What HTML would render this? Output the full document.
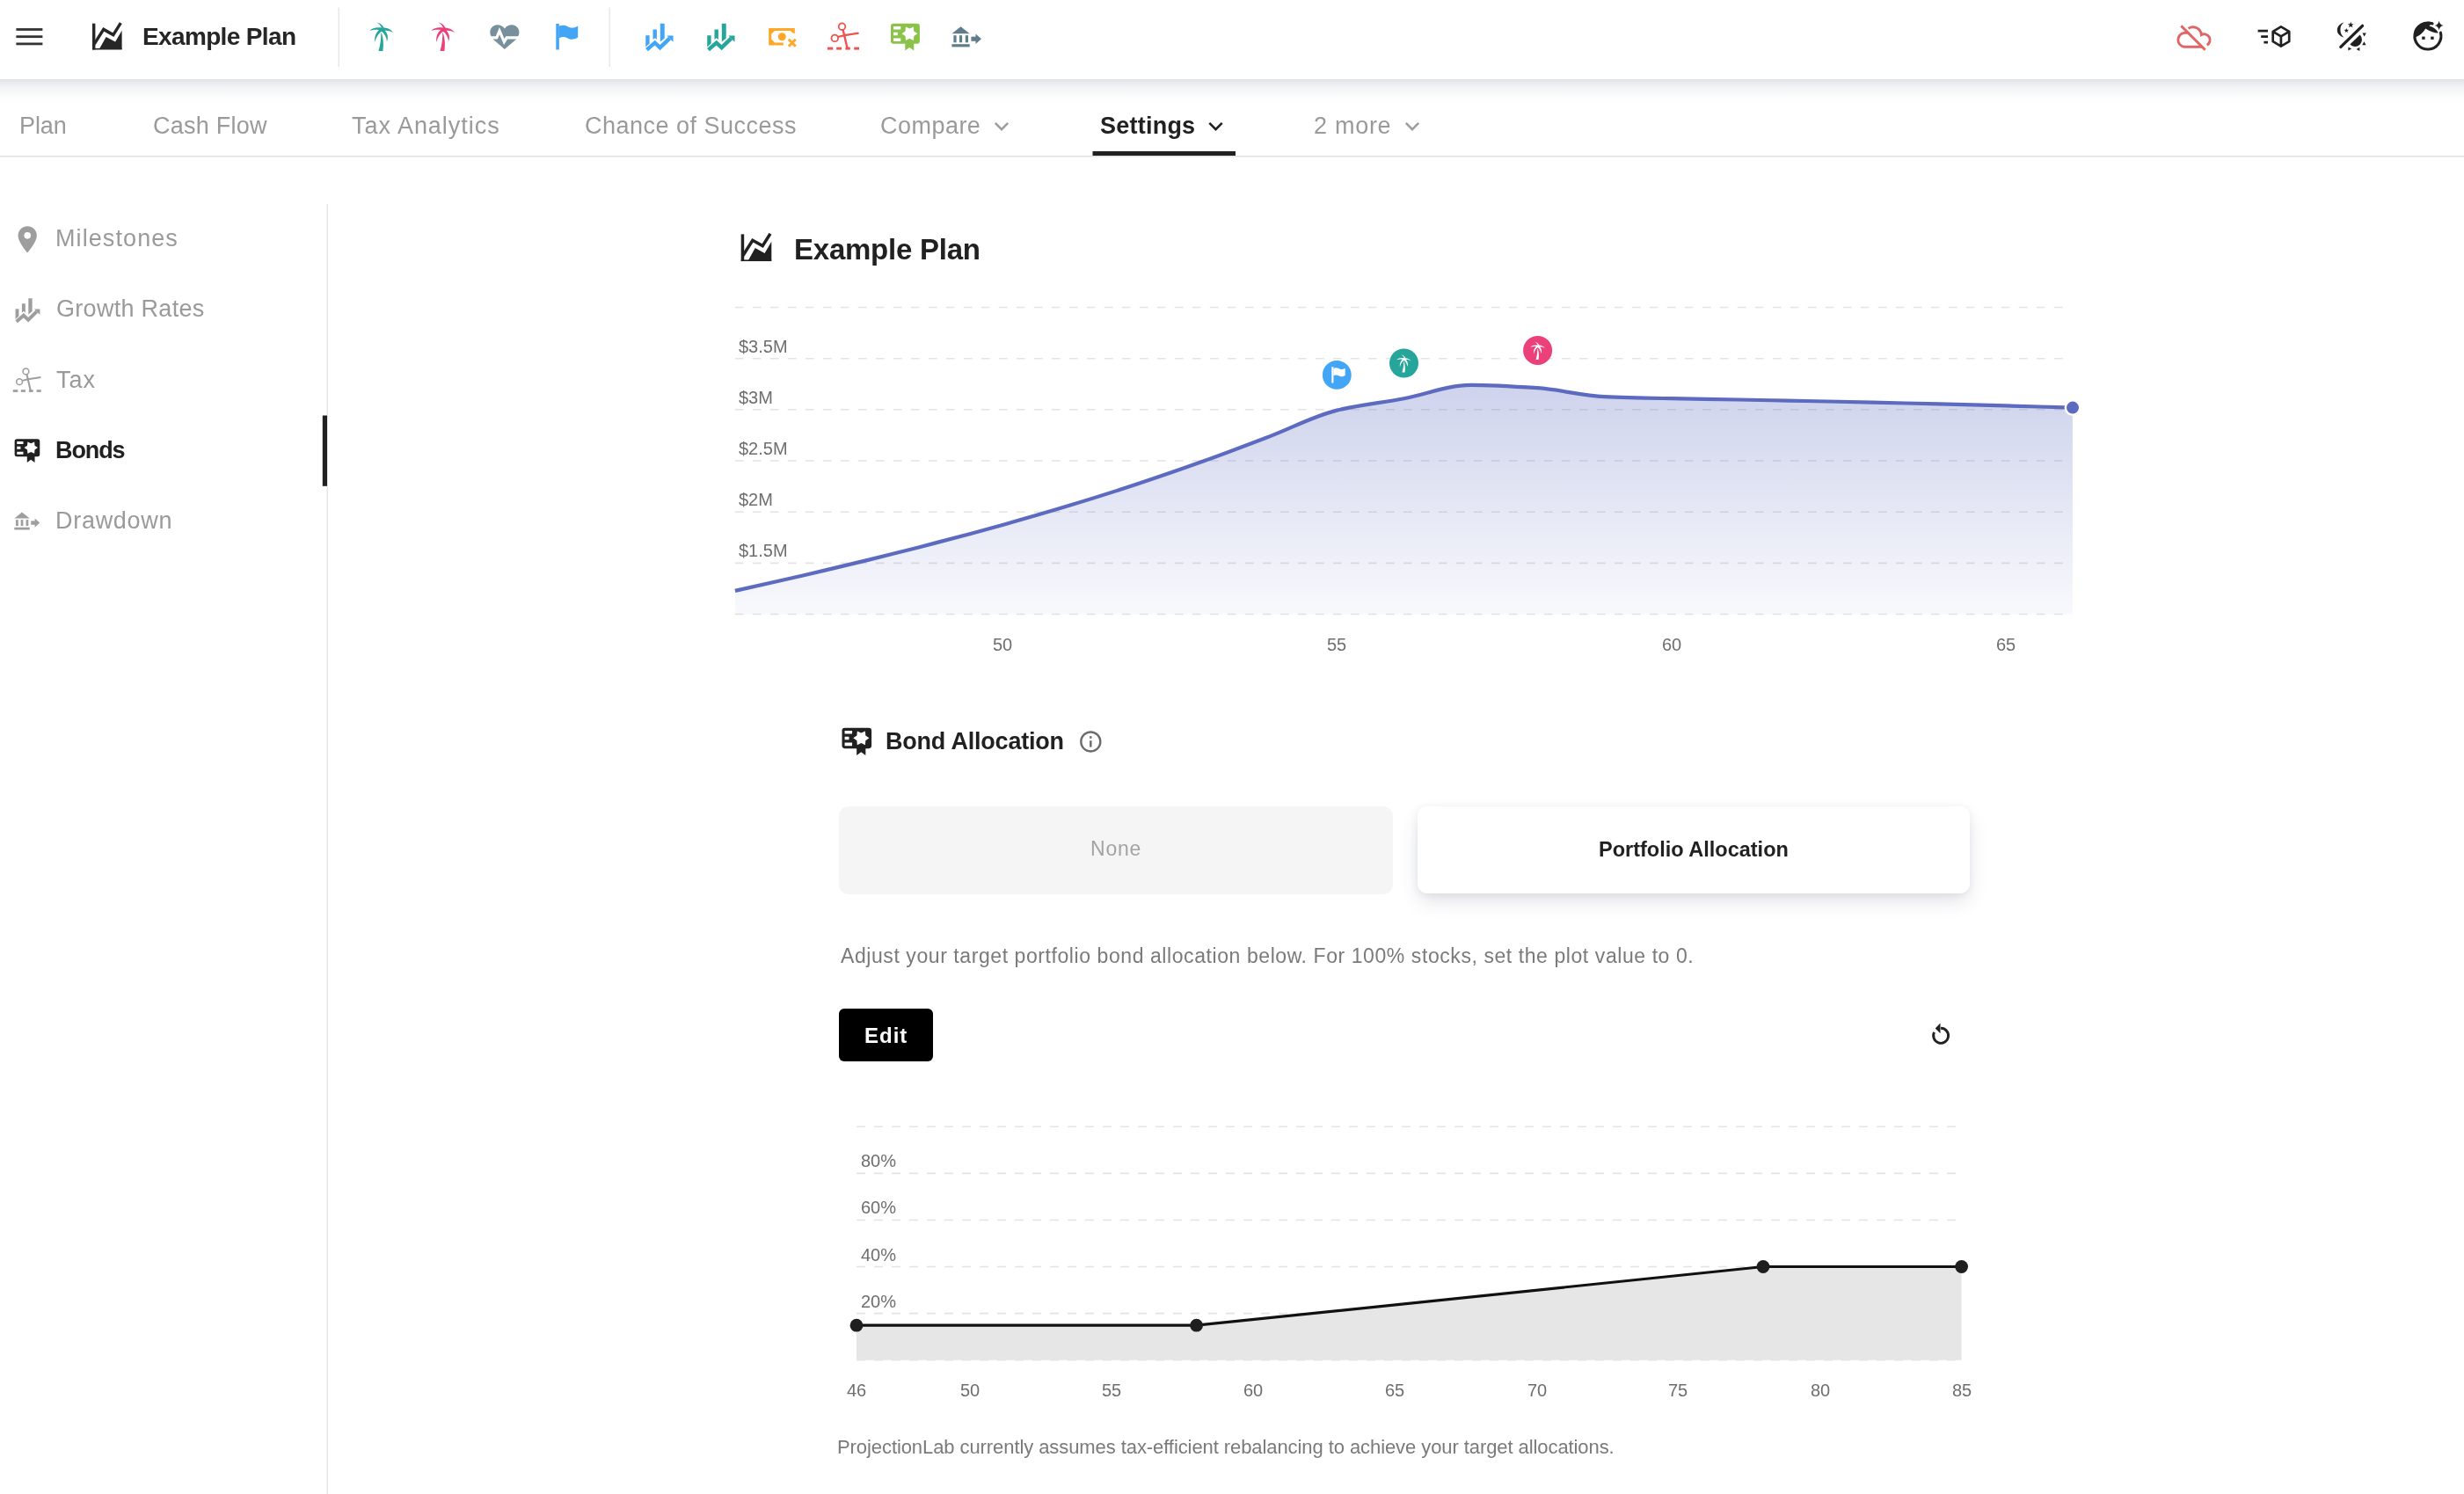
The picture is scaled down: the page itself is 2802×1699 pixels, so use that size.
<!DOCTYPE html>
<html><head><meta charset="utf-8"><title>ProjectionLab - Settings</title>
<style>
html,body{margin:0;padding:0;}
body{width:2802px;height:1699px;overflow:hidden;position:relative;background:#fff;font-family:"Liberation Sans", sans-serif;}
.t{position:absolute;white-space:nowrap;line-height:1;will-change:transform;}
.topbar{position:absolute;left:0;top:0;width:2802px;height:90px;background:#fff;}
.shadow{position:absolute;left:0;top:90px;width:2802px;height:28px;background:linear-gradient(to bottom, rgba(80,95,120,0.17), rgba(80,95,120,0.07) 35%, rgba(80,95,120,0.02) 70%, rgba(80,95,120,0) 100%);}
.btn{position:absolute;display:flex;align-items:center;justify-content:center;box-sizing:border-box;}
svg.ov{position:absolute;left:0;top:0;}
</style></head>
<body>
<div class="topbar"></div>
<div class="shadow"></div>
<div class="btn" style="left:954.2px;top:916.5px;width:630px;height:100px;background:#f5f5f5;border-radius:11px;"></div>
<div class="btn" style="left:1611.8px;top:917px;width:628.7px;height:99.4px;background:#fff;border-radius:11px;box-shadow:0 10px 22px -2px rgba(60,70,100,0.16), 0 2px 8px rgba(60,70,100,0.07);"></div>
<div class="btn" style="left:954.4px;top:1146.7px;width:106.8px;height:60.3px;background:#000;border-radius:6px;"></div>
<svg class="ov" width="2802" height="1699" viewBox="0 0 2802 1699">
<defs>
<g id="i-chart"><g transform="translate(-21.8,-21.6)">
<rect x="5" y="6.7" width="3.4" height="29.8"/>
<rect x="5" y="34.9" width="33.6" height="1.6"/>
<polyline points="7.2,30.2 17.8,13.4 28.8,19.6 37.3,6.1" fill="none" stroke="currentColor" stroke-width="3.4" stroke-linejoin="miter"/>
<polygon points="12.8,36 20.6,21.9 31.1,27.6 38.6,14.8 38.6,36"/>
</g></g><g id="i-growth"><g transform="translate(-24.9,-22.3)">
<polygon points="9.25,20.2 13.6,20.2 13.6,29.6 9.25,33.4"/>
<polygon points="17.5,13.6 21.9,13.6 21.9,24.9 19.7,23.3 17.5,24.9"/>
<polygon points="25.8,6.8 30.7,6.8 30.7,23.4 25.8,27.6"/>
<polyline points="10.5,36.6 19.7,28.6 25.6,34.2 36.5,23.6" fill="none" stroke="currentColor" stroke-width="4.4" stroke-linejoin="miter"/>
<polygon points="33.4,20.4 40.5,20.4 40.5,27.8"/>
</g></g><g id="i-palm"><g transform="translate(-23.75,-23.75)">
<path d="M23.3,18.5 C25.8,24 26.6,32 25.4,40 L20.5,40 C22.6,33 23.4,26 23.3,18.5 Z"/>
<path d="M24.2,13.6 C18.5,12.6 13.2,13.6 10.5,17 C14,15.6 18,15.4 21,16 C17.6,19.2 15.4,24 16.4,30 C17.6,24.3 20.6,19.6 24.6,17.2 Z"/>
<path d="M23.6,13.6 C29.6,13 34.8,15.2 37,19 C33.6,17 30.2,16.4 27.6,16.8 C30.6,20 32,24.2 30,29.2 C29.6,24.2 27.4,20 23.4,17.2 Z"/>
<path d="M24.6,14.5 C23.4,11.4 21.2,9 18.4,7.4 C22,7.8 25,10.2 26.6,13.8 Z"/>
</g></g><g id="i-heart"><g transform="translate(-23.85,-22.15)">
<path d="M23.85,12.6 C21.6,9.6 18.6,8.3 15.6,8.3 C11,8.3 7.3,12 7.3,16.6 C7.3,19.6 8.6,22.2 10.8,24.8 L23.85,36 L36.9,24.8 C39.1,22.2 40.4,19.6 40.4,16.6 C40.4,12 36.7,8.3 32.1,8.3 C29.1,8.3 26.1,9.6 23.85,12.6 Z"/>
<polyline points="6,22.8 14.8,22.8 18,15.2 23.3,27.6 26.2,22.8 42,22.8" fill="none" stroke="#fff" stroke-width="3.2" stroke-linejoin="miter"/>
</g></g><g id="i-flag"><g transform="translate(-94.75,-21.75)">
<rect x="82.3" y="7" width="3.5" height="29.5"/>
<path d="M85.6,9.8 C89,8.4 92,8.4 95.2,10 C98.6,11.8 102,12.6 107.2,9.4 L107.2,22.6 C102,25.8 98.6,25 95.2,23.2 C92,21.6 89,21.6 85.6,23.4 Z"/>
</g></g><g id="i-money"><g transform="translate(-19.6,-16.5)">
<path d="M4.2,6 H33.8 V12 C32,12 30.4,10.8 29,9 H11 L7.2,12.8 V18.6 L11,22.4 H20.8 V25.5 H4.2 Z"/>
<circle cx="19.3" cy="15.7" r="4.5"/>
<path d="M26.8,18.8 L34.8,26.8 M34.8,18.8 L26.8,26.8" stroke="currentColor" stroke-width="3" fill="none"/>
</g></g><g id="i-scissors"><g transform="translate(-94,-21)">
<circle cx="92.5" cy="10.2" r="3.8" fill="none" stroke="currentColor" stroke-width="1.8"/>
<circle cx="84.3" cy="23.4" r="3.8" fill="none" stroke="currentColor" stroke-width="1.8"/>
<path d="M93.6,13.8 L98.6,35" stroke="currentColor" stroke-width="2.4" fill="none"/>
<path d="M87.8,22 L95.6,20.2 L111.6,17.6" stroke="currentColor" stroke-width="2.2" fill="none"/>
<rect x="76" y="33.6" width="6.3" height="3"/><rect x="86.2" y="33.6" width="5.8" height="3"/>
<rect x="96.4" y="33.6" width="5.4" height="3"/><rect x="106.2" y="33.6" width="5.8" height="3"/>
</g></g><g id="i-cert"><g transform="translate(-20.45,-20.2)">
<path fill-rule="evenodd" d="M7,4.8 H33.9 A3,3 0 0 1 36.9,7.8 V24.8 A3,3 0 0 1 33.9,27.8 H7 A3,3 0 0 1 4,24.8 V7.8 A3,3 0 0 1 7,4.8 Z M7,8 V11.5 H15.3 V8 Z M7,14.7 V18.2 H11.8 V14.7 Z M7,21.4 V24.9 H15.3 V21.4 Z"/>
<polygon points="29.85,8.49 30.25,13.40 34.30,16.20 30.25,19.00 29.85,23.91 25.40,21.80 20.95,23.91 20.55,19.00 16.50,16.20 20.55,13.40 20.95,8.49 25.40,10.60" fill="#fff"/>
<polygon points="20.3,26 30.3,26 30.3,35.6 25.3,31.9 20.3,35.6"/>
</g></g><g id="i-bank"><g transform="translate(-94.2,-21.8)">
<polygon points="77.4,18.3 87.55,10.2 97.7,18.3"/>
<rect x="79.4" y="20.2" width="3.2" height="8.1"/><rect x="86" y="20.2" width="3.1" height="8.1"/><rect x="92.8" y="20.2" width="3.2" height="8.1"/>
<rect x="77.4" y="30.2" width="20.3" height="3.2"/>
<rect x="99.4" y="21.7" width="5.6" height="5.1"/>
<polygon points="104.5,18.4 111,24.25 104.5,30.1"/>
</g></g><g id="i-cloud"><g transform="translate(-24.15,-23.1)" fill="none" stroke="currentColor" stroke-width="2.9">
<path d="M18.4,17.4 H13.9 A7.98,7.98 0 0 0 13.9,33.25 H34.2"/>
<path d="M18.6,12.4 A9.6,9.6 0 0 1 33.4,19.6 A6.4,6.4 0 0 1 39.7,31.2"/>
<path d="M10.3,9.4 L37.7,36.8"/>
</g></g><g id="i-cube"><g transform="translate(-121,-23.6)" fill="none" stroke="currentColor" stroke-width="2.7">
<path d="M102.6,17.2 H114 M106.2,23.7 H114 M109.4,30.2 H114"/>
<path d="M128.9,12.4 L138.2,17.8 V29.2 L128.9,34.6 L119.7,29.2 V17.8 Z M119.7,17.8 L128.9,23.3 L138.2,17.8 M128.9,23.3 V34.6" stroke-linejoin="round"/>
</g></g><g id="i-theme"><g transform="translate(-22.2,-23.35)">
<path d="M9.85,35.4 L34.5,11.4" stroke="currentColor" stroke-width="3.4" stroke-linecap="round" fill="none"/>
<path d="M13.4,7.6 C8.6,9 5.8,12.6 5.8,16.2 C5.8,20 8.6,23.2 13.4,24.4 C10.8,22.6 9.4,19.6 9.4,16 C9.4,12.4 10.8,9.6 13.4,7.6 Z"/>
<polygon points="21.20,6.80 22.09,9.18 24.62,9.29 22.64,10.87 23.32,13.31 21.20,11.91 19.08,13.31 19.76,10.87 17.78,9.29 20.31,9.18"/>
<polygon points="16.30,14.00 16.99,15.85 18.96,15.93 17.42,17.16 17.95,19.07 16.30,17.98 14.65,19.07 15.18,17.16 13.64,15.93 15.61,15.85"/>
<path d="M20.3,32.6 L31.7,21.6 A7.9,7.9 0 0 1 20.3,32.6 Z"/>
<polygon points="34.4,19.6 38.8,19.6 36.6,23.4"/><polygon points="36.4,29.2 38.6,33.2 34.2,33.2"/>
<polygon points="18.4,35.6 22.2,37.6 18.4,39.6"/><polygon points="31.4,35.8 31.4,40 27.6,37.9"/>
</g></g><g id="i-face"><g transform="translate(-22.9,-23.05)">
<path d="M37.39,19.17 A15,15 0 1 1 28.03,8.95" fill="none" stroke="currentColor" stroke-width="3.1" stroke-linecap="round"/>
<path d="M7.2,25.2 C7,16 13,8.4 22,6.9 C24.6,6.5 27,6.8 29,7.6 L24.4,11.4 C28.4,12.6 32.8,14.6 34.8,19.6 C30.6,19.8 26,18 20.2,14.6 C17.6,19.4 12.6,23.4 7.2,25.2 Z"/>
<rect x="16.2" y="23.6" width="3.4" height="3.3"/><rect x="26.2" y="23.6" width="3.4" height="3.3"/>
<path d="M35.6,5.4 Q36.3,10.3 40.8,10.9 Q36.3,11.5 35.6,16.4 Q34.9,11.5 30.4,10.9 Q34.9,10.3 35.6,5.4 Z"/>
</g></g><g id="i-marker"><g transform="translate(-12,-12)"><path d="M12,11.5A2.5,2.5 0 0,1 9.5,9A2.5,2.5 0 0,1 12,6.5A2.5,2.5 0 0,1 14.5,9A2.5,2.5 0 0,1 12,11.5M12,2A7,7 0 0,0 5,9C5,14.25 12,22 12,22C12,22 19,14.25 19,9A7,7 0 0,0 12,2Z"/></g></g><g id="i-menu"><rect x="-15" y="-9.6" width="30" height="2.8"/><rect x="-15" y="-1.4" width="30" height="2.8"/><rect x="-15" y="6.8" width="30" height="2.8"/></g><g id="i-info"><g transform="translate(-12,-12)"><path d="M11,9H13V7H11M12,20C7.59,20 4,16.41 4,12C4,7.59 7.59,4 12,4C16.41,4 20,7.59 20,12C20,16.41 16.41,20 12,20M12,2A10,10 0 0,0 2,12A10,10 0 0,0 12,22A10,10 0 0,0 22,12A10,10 0 0,0 12,2M11,17H13V11H11V17Z"/></g></g><g id="i-restore"><path d="M0,-8.5 A8.5,8.5 0 1 1 -7.57,-3.86" fill="none" stroke="currentColor" stroke-width="2.9"/><polygon points="-6.4,-8.4 -0.6,-14.2 -0.6,-2.6"/></g><g id="i-chev"><path d="M-7.2,-3.6 L0,3.6 L7.2,-3.6" fill="none" stroke="currentColor" stroke-width="2.6"/></g>
</defs>
<use href="#i-menu" transform="translate(33.4,41.7) scale(1.0)" fill="#333" color="#333"/>
<use href="#i-chart" transform="translate(121.8,41.6) scale(1.0)" fill="#262626" color="#262626"/>
<rect x="384.5" y="8.5" width="1.5" height="67.5" fill="#e8e8e8"/>
<rect x="692.5" y="8.5" width="1.5" height="67.5" fill="#e8e8e8"/>
<use href="#i-palm" transform="translate(433.75,41.75) scale(1.0)" fill="#26a69a" color="#26a69a"/>
<use href="#i-palm" transform="translate(503.75,41.75) scale(1.0)" fill="#ec407a" color="#ec407a"/>
<use href="#i-heart" transform="translate(573.85,42.15) scale(1.0)" fill="#78909c" color="#78909c"/>
<use href="#i-flag" transform="translate(644.75,41.75) scale(1.0)" fill="#42a5f5" color="#42a5f5"/>
<use href="#i-growth" transform="translate(749.9,42.3) scale(1.0)" fill="#42a5f5" color="#42a5f5"/>
<use href="#i-growth" transform="translate(819.9,42.3) scale(1.0)" fill="#26a69a" color="#26a69a"/>
<use href="#i-money" transform="translate(889.6,42.5) scale(1.0)" fill="#ffa726" color="#ffa726"/>
<use href="#i-scissors" transform="translate(959,41) scale(1.0)" fill="#ef5350" color="#ef5350"/>
<use href="#i-cert" transform="translate(1029.45,42.2) scale(1.0)" fill="#8bc34a" color="#8bc34a"/>
<use href="#i-bank" transform="translate(1099.2,41.8) scale(1.0)" fill="#607d8b" color="#607d8b"/>
<use href="#i-cloud" transform="translate(2494.15,43.1) scale(1.0)" fill="#e06666" color="#e06666"/>
<use href="#i-cube" transform="translate(2586,41.6) scale(1.0)" fill="#212121" color="#212121"/>
<use href="#i-theme" transform="translate(2674.2,41.35) scale(1.0)" fill="#212121" color="#212121"/>
<use href="#i-face" transform="translate(2760.9,41.05) scale(1.0)" fill="#212121" color="#212121"/>
<rect x="0" y="177" width="2802" height="1.5" fill="#e0e0e0"/>
<rect x="1242.5" y="172" width="162.5" height="5" fill="#212121"/>
<use href="#i-chev" transform="translate(1139,143.5) scale(1.0)" fill="#9e9e9e" color="#9e9e9e"/>
<use href="#i-chev" transform="translate(1382.5,143.5) scale(1.0)" fill="#212121" color="#212121"/>
<use href="#i-chev" transform="translate(1606,143.5) scale(1.0)" fill="#9e9e9e" color="#9e9e9e"/>
<rect x="371.5" y="232" width="1.5" height="1467" fill="#e6e6e6"/>
<rect x="366.8" y="472.5" width="5.2" height="80.3" fill="#212121"/>
<use href="#i-marker" transform="translate(31.2,272.4) scale(1.52)" fill="#9e9e9e" color="#9e9e9e"/>
<use href="#i-growth" transform="translate(31.5,353.1) scale(0.89)" fill="#9e9e9e" color="#9e9e9e"/>
<use href="#i-scissors" transform="translate(30.75,432) scale(0.89)" fill="#9e9e9e" color="#9e9e9e"/>
<use href="#i-cert" transform="translate(30.95,512.6) scale(0.87)" fill="#212121" color="#212121"/>
<use href="#i-bank" transform="translate(30.75,592.5) scale(0.86)" fill="#9e9e9e" color="#9e9e9e"/>
<use href="#i-chart" transform="translate(860,281.7) scale(1.03)" fill="#212121" color="#212121"/>
<line x1="835.7" y1="349.5" x2="2347" y2="349.5" stroke="#e4e4e4" stroke-width="1.6" stroke-dasharray="10 10"/>
<line x1="835.7" y1="407.7" x2="2347" y2="407.7" stroke="#e4e4e4" stroke-width="1.6" stroke-dasharray="10 10"/>
<line x1="835.7" y1="465.8" x2="2347" y2="465.8" stroke="#e4e4e4" stroke-width="1.6" stroke-dasharray="10 10"/>
<line x1="835.7" y1="524.0" x2="2347" y2="524.0" stroke="#e4e4e4" stroke-width="1.6" stroke-dasharray="10 10"/>
<line x1="835.7" y1="582.2" x2="2347" y2="582.2" stroke="#e4e4e4" stroke-width="1.6" stroke-dasharray="10 10"/>
<line x1="835.7" y1="640.4" x2="2347" y2="640.4" stroke="#e4e4e4" stroke-width="1.6" stroke-dasharray="10 10"/>
<line x1="835.7" y1="698.5" x2="2347" y2="698.5" stroke="#e4e4e4" stroke-width="1.6" stroke-dasharray="10 10"/>
<defs><linearGradient id="gfill" x1="0" y1="0" x2="0" y2="1"><stop offset="0" stop-color="#5c6bc0" stop-opacity="0.30"/><stop offset="1" stop-color="#5c6bc0" stop-opacity="0.04"/></linearGradient></defs>
<path d="M835.9,671.9 C861.2,666.2 886.6,660.6 911.9,654.7 C937.3,648.8 962.6,642.8 988.0,636.6 C1013.3,630.4 1038.7,624.0 1064.0,617.4 C1089.4,610.8 1114.7,604.0 1140.1,596.9 C1165.5,589.8 1190.8,582.5 1216.2,574.8 C1241.5,567.1 1266.9,559.2 1292.2,550.8 C1317.5,542.4 1342.9,533.7 1368.2,524.6 C1393.6,515.5 1418.9,505.8 1444.3,496.1 C1469.6,486.4 1495.0,472.7 1520.3,466.6 C1545.7,460.5 1571.0,458.0 1596.4,453.2 C1621.7,448.4 1647.1,437.8 1672.4,437.8 C1697.8,437.8 1723.1,439.5 1748.5,441.2 C1773.8,442.9 1799.2,450.1 1824.5,451.2 C1849.9,452.3 1875.2,452.7 1900.6,453.2 C1926.0,453.7 1951.3,454.0 1976.7,454.5 C2002.0,455.0 2027.4,455.5 2052.7,456.0 C2078.1,456.5 2103.4,457.0 2128.8,457.6 C2154.1,458.2 2179.5,458.8 2204.8,459.4 C2230.1,460.0 2255.5,460.7 2280.8,461.4 C2306.2,462.1 2331.5,462.9 2356.9,463.6 L2357,698.5 L835.9,698.5 Z" fill="url(#gfill)"/>
<path d="M835.9,671.9 C861.2,666.2 886.6,660.6 911.9,654.7 C937.3,648.8 962.6,642.8 988.0,636.6 C1013.3,630.4 1038.7,624.0 1064.0,617.4 C1089.4,610.8 1114.7,604.0 1140.1,596.9 C1165.5,589.8 1190.8,582.5 1216.2,574.8 C1241.5,567.1 1266.9,559.2 1292.2,550.8 C1317.5,542.4 1342.9,533.7 1368.2,524.6 C1393.6,515.5 1418.9,505.8 1444.3,496.1 C1469.6,486.4 1495.0,472.7 1520.3,466.6 C1545.7,460.5 1571.0,458.0 1596.4,453.2 C1621.7,448.4 1647.1,437.8 1672.4,437.8 C1697.8,437.8 1723.1,439.5 1748.5,441.2 C1773.8,442.9 1799.2,450.1 1824.5,451.2 C1849.9,452.3 1875.2,452.7 1900.6,453.2 C1926.0,453.7 1951.3,454.0 1976.7,454.5 C2002.0,455.0 2027.4,455.5 2052.7,456.0 C2078.1,456.5 2103.4,457.0 2128.8,457.6 C2154.1,458.2 2179.5,458.8 2204.8,459.4 C2230.1,460.0 2255.5,460.7 2280.8,461.4 C2306.2,462.1 2331.5,462.9 2356.9,463.6" fill="none" stroke="#5c6bc0" stroke-width="4.2"/>
<circle cx="2357" cy="463.6" r="8.2" fill="#5c6bc0" stroke="#fff" stroke-width="2.4"/>
<circle cx="1520.3" cy="426.4" r="16.4" fill="#42a5f5"/>
<use href="#i-flag" transform="translate(1522,426.4) scale(0.62)" fill="#fff" color="#fff"/>
<circle cx="1596.5" cy="413" r="16.5" fill="#26a69a"/>
<use href="#i-palm" transform="translate(1596.5,413.5) scale(0.62)" fill="#fff" color="#fff"/>
<circle cx="1748.6" cy="398.4" r="16.5" fill="#ec407a"/>
<use href="#i-palm" transform="translate(1748.6,398.9) scale(0.62)" fill="#fff" color="#fff"/>
<use href="#i-cert" transform="translate(974.3,843.4) scale(1.02)" fill="#212121" color="#212121"/>
<use href="#i-info" transform="translate(1240.3,843.45) scale(1.22)" fill="#6b6b6b" color="#6b6b6b"/>
<use href="#i-restore" transform="translate(2207.1,1177.8) scale(1.0)" fill="#212121" color="#212121"/>
<line x1="974" y1="1281.3" x2="2226" y2="1281.3" stroke="#e4e4e4" stroke-width="1.6" stroke-dasharray="10 10"/>
<line x1="974" y1="1334.4" x2="2226" y2="1334.4" stroke="#e4e4e4" stroke-width="1.6" stroke-dasharray="10 10"/>
<line x1="974" y1="1387.5" x2="2226" y2="1387.5" stroke="#e4e4e4" stroke-width="1.6" stroke-dasharray="10 10"/>
<line x1="974" y1="1440.5" x2="2226" y2="1440.5" stroke="#e4e4e4" stroke-width="1.6" stroke-dasharray="10 10"/>
<line x1="974" y1="1493.6" x2="2226" y2="1493.6" stroke="#e4e4e4" stroke-width="1.6" stroke-dasharray="10 10"/>
<line x1="974" y1="1546.7" x2="2226" y2="1546.7" stroke="#e4e4e4" stroke-width="1.6" stroke-dasharray="10 10"/>
<path d="M974,1507.2 L1360.6,1507.2 L2005,1440.5 L2230.6,1440.5 L2230.6,1546.7 L974,1546.7 Z" fill="#e6e6e6"/>
<path d="M974,1507.2 L1360.6,1507.2 L2005,1440.5 L2230.6,1440.5" fill="none" stroke="#111" stroke-width="3.2"/>
<circle cx="974" cy="1507.2" r="7.4" fill="#1f1f1f"/>
<circle cx="1360.6" cy="1507.2" r="7.4" fill="#1f1f1f"/>
<circle cx="2005" cy="1440.5" r="7.4" fill="#1f1f1f"/>
<circle cx="2230.6" cy="1440.5" r="7.4" fill="#1f1f1f"/>

</svg>
<div class="t" style="left:162.0px;top:28px;font-size:28px;color:#262626;font-weight:700;letter-spacing:-0.64px;">Example Plan</div>
<div class="t" style="left:22.4px;top:130px;font-size:27px;color:#9a9a9a;font-weight:400;letter-spacing:-0.07px;">Plan</div>
<div class="t" style="left:173.7px;top:130px;font-size:27px;color:#9a9a9a;font-weight:400;letter-spacing:0.24px;">Cash Flow</div>
<div class="t" style="left:399.5px;top:130px;font-size:27px;color:#9a9a9a;font-weight:400;letter-spacing:0.97px;">Tax Analytics</div>
<div class="t" style="left:664.5px;top:130px;font-size:27px;color:#9a9a9a;font-weight:400;letter-spacing:0.49px;">Chance of Success</div>
<div class="t" style="left:1001.4px;top:130px;font-size:27px;color:#9a9a9a;font-weight:400;letter-spacing:0.47px;">Compare</div>
<div class="t" style="left:1250.6px;top:130px;font-size:27px;color:#212121;font-weight:700;letter-spacing:0.23px;">Settings</div>
<div class="t" style="left:1493.8px;top:130px;font-size:27px;color:#9a9a9a;font-weight:400;letter-spacing:0.72px;">2 more</div>
<div class="t" style="left:63.1px;top:258px;font-size:27px;color:#9a9a9a;font-weight:400;letter-spacing:1.09px;">Milestones</div>
<div class="t" style="left:64.1px;top:338px;font-size:27px;color:#9a9a9a;font-weight:400;letter-spacing:0.29px;">Growth Rates</div>
<div class="t" style="left:63.7px;top:419px;font-size:27px;color:#9a9a9a;font-weight:400;letter-spacing:0.95px;">Tax</div>
<div class="t" style="left:63.1px;top:499px;font-size:27px;color:#212121;font-weight:700;letter-spacing:-1.1px;">Bonds</div>
<div class="t" style="left:63.0px;top:579px;font-size:27px;color:#9a9a9a;font-weight:400;letter-spacing:0.71px;">Drawdown</div>
<div class="t" style="left:902.6px;top:267px;font-size:33px;color:#212121;font-weight:700;letter-spacing:-0.24px;">Example Plan</div>
<div class="t" style="left:840.0px;top:384px;font-size:20px;color:#6e6e6e;font-weight:400;">$3.5M</div>
<div class="t" style="left:840.0px;top:442px;font-size:20px;color:#6e6e6e;font-weight:400;">$3M</div>
<div class="t" style="left:840.0px;top:500px;font-size:20px;color:#6e6e6e;font-weight:400;">$2.5M</div>
<div class="t" style="left:840.0px;top:558px;font-size:20px;color:#6e6e6e;font-weight:400;">$2M</div>
<div class="t" style="left:840.0px;top:616px;font-size:20px;color:#6e6e6e;font-weight:400;">$1.5M</div>
<div class="t" style="left:1139.5px;top:723px;font-size:20px;color:#6e6e6e;font-weight:400;transform:translateX(-50%);">50</div>
<div class="t" style="left:1520.0px;top:723px;font-size:20px;color:#6e6e6e;font-weight:400;transform:translateX(-50%);">55</div>
<div class="t" style="left:1900.7px;top:723px;font-size:20px;color:#6e6e6e;font-weight:400;transform:translateX(-50%);">60</div>
<div class="t" style="left:2280.6px;top:723px;font-size:20px;color:#6e6e6e;font-weight:400;transform:translateX(-50%);">65</div>
<div class="t" style="left:1006.8px;top:830px;font-size:27px;color:#212121;font-weight:700;letter-spacing:-0.21px;">Bond Allocation</div>
<div class="t" style="left:955.6px;top:1076px;font-size:23px;color:#7a7a7a;font-weight:400;letter-spacing:0.576px;">Adjust your target portfolio bond allocation below. For 100% stocks, set the plot value to 0.</div>
<div class="t" style="left:979.0px;top:1310px;font-size:20px;color:#6e6e6e;font-weight:400;">80%</div>
<div class="t" style="left:979.0px;top:1363px;font-size:20px;color:#6e6e6e;font-weight:400;">60%</div>
<div class="t" style="left:979.0px;top:1417px;font-size:20px;color:#6e6e6e;font-weight:400;">40%</div>
<div class="t" style="left:979.0px;top:1470px;font-size:20px;color:#6e6e6e;font-weight:400;">20%</div>
<div class="t" style="left:974.0px;top:1571px;font-size:20px;color:#6e6e6e;font-weight:400;transform:translateX(-50%);">46</div>
<div class="t" style="left:1103.0px;top:1571px;font-size:20px;color:#6e6e6e;font-weight:400;transform:translateX(-50%);">50</div>
<div class="t" style="left:1264.0px;top:1571px;font-size:20px;color:#6e6e6e;font-weight:400;transform:translateX(-50%);">55</div>
<div class="t" style="left:1425.3px;top:1571px;font-size:20px;color:#6e6e6e;font-weight:400;transform:translateX(-50%);">60</div>
<div class="t" style="left:1586.0px;top:1571px;font-size:20px;color:#6e6e6e;font-weight:400;transform:translateX(-50%);">65</div>
<div class="t" style="left:1747.9px;top:1571px;font-size:20px;color:#6e6e6e;font-weight:400;transform:translateX(-50%);">70</div>
<div class="t" style="left:1908.4px;top:1571px;font-size:20px;color:#6e6e6e;font-weight:400;transform:translateX(-50%);">75</div>
<div class="t" style="left:2069.8px;top:1571px;font-size:20px;color:#6e6e6e;font-weight:400;transform:translateX(-50%);">80</div>
<div class="t" style="left:2230.6px;top:1571px;font-size:20px;color:#6e6e6e;font-weight:400;transform:translateX(-50%);">85</div>
<div class="t" style="left:952.0px;top:1635px;font-size:22px;color:#7a7a7a;font-weight:400;letter-spacing:-0.08px;">ProjectionLab currently assumes tax-efficient rebalancing to achieve your target allocations.</div>
<div class="t" style="left:1239.7px;top:954px;font-size:23px;color:#a3a3a3;font-weight:400;letter-spacing:0.8px;">None</div>
<div class="t" style="left:1817.6px;top:955px;font-size:23.5px;color:#212121;font-weight:700;">Portfolio Allocation</div>
<div class="t" style="left:983.0px;top:1166px;font-size:24px;color:#fff;font-weight:700;letter-spacing:1.0px;">Edit</div>

</body></html>
